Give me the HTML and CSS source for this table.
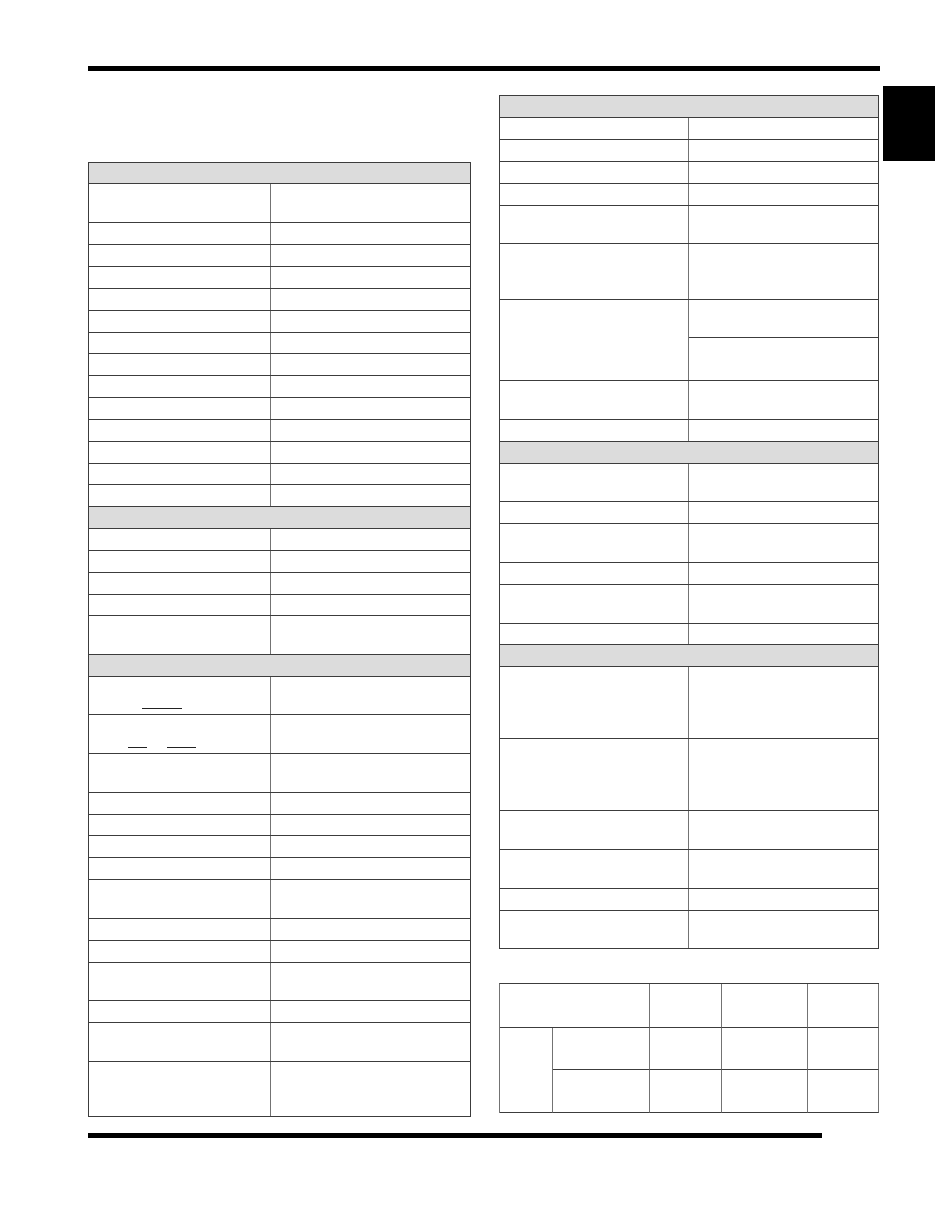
FILE: index.html
```html
<!DOCTYPE html>
<html>
<head>
<meta charset="utf-8">
<link rel="stylesheet" href="styles.css">
</head>
<body>
<div class="page">
  <div class="rule-top"></div>
  <div class="tab"></div>
  <div class="columns">
    <div class="col-left">
      <div class="table table-left">
        <div class="row head" style="height:21px"></div>
        <div class="row" style="height:39px"><div class="c"></div><div class="c"></div></div>
        <div class="row" style="height:22px"><div class="c"></div><div class="c"></div></div>
        <div class="row" style="height:22px"><div class="c"></div><div class="c"></div></div>
        <div class="row" style="height:22px"><div class="c"></div><div class="c"></div></div>
        <div class="row" style="height:22px"><div class="c"></div><div class="c"></div></div>
        <div class="row" style="height:22px"><div class="c"></div><div class="c"></div></div>
        <div class="row" style="height:21px"><div class="c"></div><div class="c"></div></div>
        <div class="row" style="height:22px"><div class="c"></div><div class="c"></div></div>
        <div class="row" style="height:22px"><div class="c"></div><div class="c"></div></div>
        <div class="row" style="height:22px"><div class="c"></div><div class="c"></div></div>
        <div class="row" style="height:22px"><div class="c"></div><div class="c"></div></div>
        <div class="row" style="height:22px"><div class="c"></div><div class="c"></div></div>
        <div class="row" style="height:21px"><div class="c"></div><div class="c"></div></div>
        <div class="row" style="height:22px"><div class="c"></div><div class="c"></div></div>
        <div class="row head" style="height:22px"></div>
        <div class="row" style="height:22px"><div class="c"></div><div class="c"></div></div>
        <div class="row" style="height:22px"><div class="c"></div><div class="c"></div></div>
        <div class="row" style="height:22px"><div class="c"></div><div class="c"></div></div>
        <div class="row" style="height:21px"><div class="c"></div><div class="c"></div></div>
        <div class="row" style="height:39px"><div class="c"></div><div class="c"></div></div>
        <div class="row head" style="height:22px"></div>
        <div class="row" style="height:38px"><div class="c frac frac-a"><span class="bar w40"></span></div><div class="c"></div></div>
        <div class="row" style="height:39px"><div class="c frac frac-b"><span class="bar w19"></span><span class="bar w29"></span></div><div class="c"></div></div>
        <div class="row" style="height:39px"><div class="c"></div><div class="c"></div></div>
        <div class="row" style="height:22px"><div class="c"></div><div class="c"></div></div>
        <div class="row" style="height:21px"><div class="c"></div><div class="c"></div></div>
        <div class="row" style="height:22px"><div class="c"></div><div class="c"></div></div>
        <div class="row" style="height:22px"><div class="c"></div><div class="c"></div></div>
        <div class="row" style="height:39px"><div class="c"></div><div class="c"></div></div>
        <div class="row" style="height:22px"><div class="c"></div><div class="c"></div></div>
        <div class="row" style="height:22px"><div class="c"></div><div class="c"></div></div>
        <div class="row" style="height:38px"><div class="c"></div><div class="c"></div></div>
        <div class="row" style="height:22px"><div class="c"></div><div class="c"></div></div>
        <div class="row" style="height:39px"><div class="c"></div><div class="c"></div></div>
        <div class="row" style="height:55px"><div class="c"></div><div class="c"></div></div>
      </div>
    </div>
    <div class="col-right">
      <div class="table table-right">
        <div class="row head" style="height:22px"></div>
        <div class="row" style="height:22px"><div class="c"></div><div class="c"></div></div>
        <div class="row" style="height:22px"><div class="c"></div><div class="c"></div></div>
        <div class="row" style="height:22px"><div class="c"></div><div class="c"></div></div>
        <div class="row" style="height:22px"><div class="c"></div><div class="c"></div></div>
        <div class="row" style="height:38px"><div class="c"></div><div class="c"></div></div>
        <div class="row" style="height:56px"><div class="c"></div><div class="c"></div></div>
        <div class="row" style="height:81px"><div class="c"></div><div class="c split"><div class="sub" style="height:38px"></div><div class="sub-last"></div></div></div>
        <div class="row" style="height:39px"><div class="c"></div><div class="c"></div></div>
        <div class="row" style="height:22px"><div class="c"></div><div class="c"></div></div>
        <div class="row head" style="height:22px"></div>
        <div class="row" style="height:38px"><div class="c"></div><div class="c"></div></div>
        <div class="row" style="height:22px"><div class="c"></div><div class="c"></div></div>
        <div class="row" style="height:39px"><div class="c"></div><div class="c"></div></div>
        <div class="row" style="height:22px"><div class="c"></div><div class="c"></div></div>
        <div class="row" style="height:39px"><div class="c"></div><div class="c"></div></div>
        <div class="row" style="height:21px"><div class="c"></div><div class="c"></div></div>
        <div class="row head" style="height:22px"></div>
        <div class="row" style="height:72px"><div class="c"></div><div class="c"></div></div>
        <div class="row" style="height:72px"><div class="c"></div><div class="c"></div></div>
        <div class="row" style="height:39px"><div class="c"></div><div class="c"></div></div>
        <div class="row" style="height:39px"><div class="c"></div><div class="c"></div></div>
        <div class="row" style="height:22px"><div class="c"></div><div class="c"></div></div>
        <div class="row" style="height:38px"><div class="c"></div><div class="c"></div></div>
      </div>
      <div class="grid-table">
        <div class="g g-span-cols"></div>
        <div class="g"></div>
        <div class="g"></div>
        <div class="g"></div>
        <div class="g g-span-rows"></div>
        <div class="g"></div>
        <div class="g"></div>
        <div class="g"></div>
        <div class="g"></div>
        <div class="g"></div>
        <div class="g"></div>
        <div class="g"></div>
        <div class="g"></div>
      </div>
    </div>
  </div>
  <div class="rule-bottom"></div>
</div>
</body>
</html>
```

FILE: styles.css
```css
:root {
  --hline: #3c3c3c;
  --vline: #737373;
  --head: #dcdcdc;
}

* {
  box-sizing: border-box;
}

body {
  margin: 0;
  background: #ffffff;
  font-family: "Liberation Sans", Arial, sans-serif;
}

.page {
  position: relative;
  padding: 66px 0 0 88px;
  min-height: 1210px;
}

.rule-top {
  width: 792px;
  height: 5px;
  background: #000;
}

.tab {
  position: absolute;
  top: 86px;
  right: 0;
  width: 52px;
  height: 75px;
  background: #000;
}

.columns {
  display: flex;
  align-items: flex-start;
  gap: 28px;
}

.col-left {
  width: 383px;
  margin-top: 91px;
}

.col-right {
  width: 380px;
  margin-top: 24px;
  display: flex;
  flex-direction: column;
  gap: 34px;
}

.table {
  border-top: 1px solid var(--hline);
  border-left: 1px solid var(--hline);
  border-right: 1px solid var(--hline);
}

.row {
  display: grid;
  border-bottom: 1px solid var(--hline);
}

.table-left .row {
  grid-template-columns: 182px 1fr;
}

.table-right .row {
  grid-template-columns: 189px 1fr;
}

.row.head {
  display: block;
  background: var(--head);
}

.c:first-child {
  border-right: 1px solid var(--vline);
}

.split {
  display: flex;
  flex-direction: column;
}

.sub {
  border-bottom: 1px solid var(--hline);
}

.sub-last {
  flex: 1;
}

.frac {
  display: flex;
  align-items: flex-start;
}

.frac-a {
  padding: 31px 0 0 53px;
}

.frac-b {
  padding: 32px 0 0 39px;
  gap: 20px;
}

.bar {
  display: block;
  height: 1px;
  background: #222;
}

.w40 { width: 40px; }
.w19 { width: 19px; }
.w29 { width: 29px; }

.grid-table {
  display: grid;
  grid-template-columns: 53px 97px 72px 86px 71px;
  grid-template-rows: 44px 42px 43px;
  border-top: 1px solid var(--hline);
  border-left: 1px solid var(--vline);
}

.g {
  border-right: 1px solid var(--vline);
  border-bottom: 1px solid var(--hline);
}

.g-span-cols {
  grid-column: 1 / 3;
}

.g-span-rows {
  grid-row: 2 / 4;
}

.rule-bottom {
  width: 734px;
  height: 5px;
  margin-top: 16px;
  background: #000;
}
```
